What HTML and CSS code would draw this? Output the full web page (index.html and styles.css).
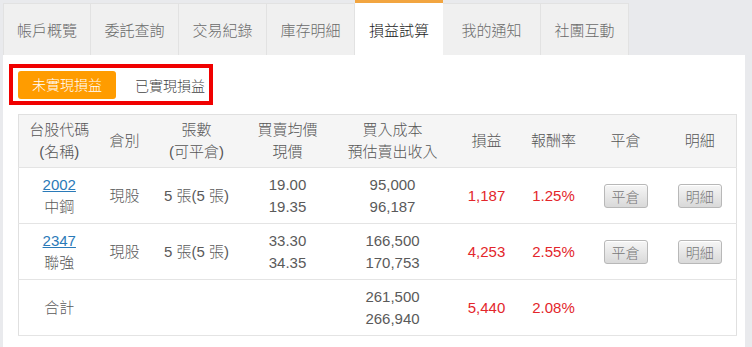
FILE: index.html
```html
<!DOCTYPE html>
<html lang="zh-Hant">
<head>
<meta charset="utf-8">
<title>損益試算</title>
<link rel="stylesheet" href="styles.css">
</head>
<body>
<div class="wrap">
  <nav class="tabs">
    <a class="tab w88">帳戶概覽</a>
    <a class="tab w88">委託查詢</a>
    <a class="tab w88">交易紀錄</a>
    <a class="tab w88">庫存明細</a>
    <a class="tab active w88">損益試算</a>
    <a class="tab w98">我的通知</a>
    <a class="tab w88">社團互動</a>
  </nav>
  <section class="panel">
    <div class="switch">
      <span class="sw-on">未實現損益</span>
      <span class="sw-off">已實現損益</span>
    </div>
    <table class="pl">
      <colgroup>
        <col class="c1"><col class="c2"><col class="c3"><col class="c4"><col class="c5">
        <col class="c6"><col class="c7"><col class="c8"><col class="c9">
      </colgroup>
      <thead>
        <tr>
          <th>台股代碼<br>(名稱)</th>
          <th>倉別</th>
          <th>張數<br>(可平倉)</th>
          <th>買賣均價<br>現價</th>
          <th>買入成本<br>預估賣出收入</th>
          <th>損益</th>
          <th>報酬率</th>
          <th>平倉</th>
          <th>明細</th>
        </tr>
      </thead>
      <tbody>
        <tr>
          <td><a class="code">2002</a><br>中鋼</td>
          <td>現股</td>
          <td>5 張(5 張)</td>
          <td>19.00<br>19.35</td>
          <td>95,000<br>96,187</td>
          <td class="red">1,187</td>
          <td class="red">1.25%</td>
          <td><button class="btn">平倉</button></td>
          <td><button class="btn">明細</button></td>
        </tr>
        <tr>
          <td><a class="code">2347</a><br>聯強</td>
          <td>現股</td>
          <td>5 張(5 張)</td>
          <td>33.30<br>34.35</td>
          <td>166,500<br>170,753</td>
          <td class="red">4,253</td>
          <td class="red">2.55%</td>
          <td><button class="btn">平倉</button></td>
          <td><button class="btn">明細</button></td>
        </tr>
        <tr>
          <td>合計</td>
          <td></td>
          <td></td>
          <td></td>
          <td>261,500<br>266,940</td>
          <td class="red">5,440</td>
          <td class="red">2.08%</td>
          <td></td>
          <td></td>
        </tr>
      </tbody>
    </table>
  </section>
</div>
</body>
</html>
```

FILE: styles.css
```css
html, body {
  margin: 0;
  padding: 0;
  height: 100%;
}
body {
  background: #e9eaed;
  font-family: "Liberation Sans", "Noto Sans CJK TC", sans-serif;
  font-size: 15px;
  font-weight: 300;
  color: #5a5a5a;
}
.wrap {
  padding: 0 7px 0 3px;
  min-height: 100%;
  box-sizing: border-box;
  display: flex;
  flex-direction: column;
}
.tabs {
  display: flex;
  height: 55px;
  align-items: flex-end;
}
.tab {
  box-sizing: border-box;
  height: 52px;
  background: #f0f0f0;
  border-top: 1px solid #e2e2e2;
  border-right: 1px solid #e2e2e2;
  color: #6a6a6a;
  display: flex;
  align-items: center;
  justify-content: center;
  padding-bottom: 1px;
  font-size: 15px;
}
.tab:first-child {
  border-left: 1px solid #e2e2e2;
}
.w88 { width: 88px; }
.w98 { width: 98px; }
.tab.active {
  height: 55px;
  background: #fff;
  border-top: 3px solid #f2a540;
  border-right: none;
  color: #222;
  padding-bottom: 0;
}
.panel {
  flex: 1;
  background: #fff;
  padding: 9px 0 0 6px;
}
.switch {
  display: inline-flex;
  align-items: center;
  border: 4px solid #f00000;
  padding: 3px 4px 2px 5px;
  font-size: 14px;
}
.sw-on {
  width: 98px;
  height: 28px;
  line-height: 28px;
  text-align: center;
  background: #ff9c00;
  color: #fff;
  border-radius: 3px;
}
.sw-off {
  padding-left: 19px;
  color: #444;
}
.pl {
  margin: 9px 0 0 9px;
  width: 718px;
  table-layout: fixed;
  border-collapse: collapse;
  border: 1px solid #e0e0e0;
}
.c1 { width: 81px; }
.c2 { width: 50px; }
.c3 { width: 94px; }
.c4 { width: 88px; }
.c5 { width: 122px; }
.c6 { width: 66px; }
.c7 { width: 68px; }
.c8 { width: 76px; }
.c9 { width: 73px; }
.pl th {
  background: #f5f5f5;
  font-weight: 300;
  color: #555;
  line-height: 22px;
  height: 52px;
  padding: 0;
  text-align: center;
  border-bottom: 1px solid #e4e4e4;
}
.pl td {
  line-height: 22px;
  height: 55px;
  padding: 0;
  text-align: center;
  border-bottom: 1px solid #e4e4e4;
  white-space: nowrap;
}
.pl td.red {
  color: #e3262b;
}
.code {
  color: #2a7ab8;
  text-decoration: underline;
}
.btn {
  width: 44px;
  height: 24px;
  padding: 0;
  font-family: inherit;
  font-size: 14px;
  font-weight: 300;
  color: #777;
  border: 1px solid #b8b8b8;
  border-radius: 3px;
  background: linear-gradient(#f6f6f6, #d9d9d9);
  box-shadow: inset 0 1px 0 #fff;
}
```
